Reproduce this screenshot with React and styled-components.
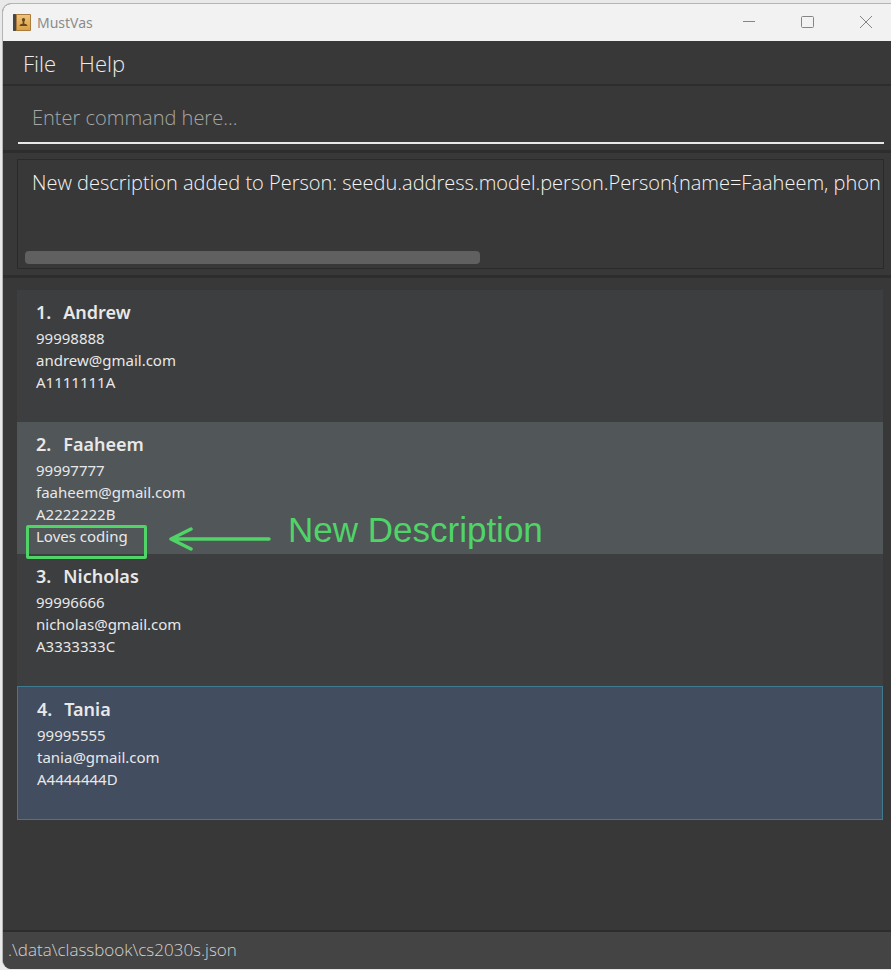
import React from "react";
import styled, { createGlobalStyle } from "styled-components";

const GlobalStyle = createGlobalStyle`
  *, *::before, *::after { box-sizing: border-box; }
  body {
    margin: 0;
    background: #e9e9e9;
    font-family: "Segoe UI", "Noto Sans", "Open Sans", sans-serif;
  }
`;

const lightFont = `"Segoe UI Light", "Open Sans", "Noto Sans", sans-serif`;

const Desktop = styled.div`
  min-height: 100vh;
  display: flex;
  padding: 3px 0 1px 2px;
  overflow: hidden;
`;

const Window = styled.div`
  flex: 1;
  min-width: 0;
  display: flex;
  flex-direction: column;
  background: #383838;
  border: solid #b4b6b6;
  border-width: 1px 0 0 1px;
  border-radius: 9px 0 0 9px;
  overflow: hidden;
`;

const TitleBar = styled.header`
  height: 37px;
  display: flex;
  align-items: center;
  gap: 6px;
  padding-left: 10px;
  background: #f2f2f2;
`;

const Title = styled.h1`
  flex: 1;
  margin: 0;
  font-size: 14px;
  line-height: 20px;
  font-weight: 400;
  color: #8b8b8b;
`;

const WindowButton = styled.button`
  width: 58px;
  height: 36px;
  display: grid;
  place-items: center;
  padding: 0;
  border: 0;
  background: transparent;
  color: #858585;
`;

const Controls = styled.div`
  display: flex;
  margin-right: -4px;
`;

const MenuBar = styled.nav`
  height: 45px;
  display: flex;
  align-items: center;
  gap: 23px;
  padding: 0 20px;
  border-bottom: 2px solid #2d2d2d;
`;

const MenuButton = styled.button`
  padding: 0;
  border: 0;
  background: transparent;
  color: #ececec;
  font-family: ${lightFont};
  font-size: 22px;
  line-height: 32px;
  font-weight: 300;
`;

const CommandPane = styled.form`
  padding: 7px 7px 6px 15px;
  border-bottom: 3px solid #2d2d2d;
`;

const CommandInput = styled.input`
  display: block;
  width: 100%;
  height: 51px;
  padding: 0 14px;
  border: 0;
  border-bottom: 2px solid #e8e8e8;
  border-radius: 0;
  outline: 0;
  background: transparent;
  color: #ffffff;
  font-family: ${lightFont};
  font-size: 20px;
  font-weight: 300;
  &::placeholder { color: #a6a6a6; opacity: 1; }
`;

const ResultPane = styled.section`
  padding: 6px 7px 6px 14px;
  border-bottom: 3px solid #2d2d2d;
`;

const ResultBox = styled.div`
  height: 110px;
  display: flex;
  flex-direction: column;
  justify-content: space-between;
  padding-bottom: 4px;
  border: 1px solid #2a2a2a;
`;

const ResultText = styled.textarea`
  display: block;
  width: 100%;
  height: 48px;
  padding: 7px 0 7px 14px;
  border: 0;
  outline: 0;
  resize: none;
  overflow: hidden;
  white-space: pre;
  background: transparent;
  color: #f4f4f4;
  font-family: ${lightFont};
  font-size: 20px;
  line-height: 32px;
  font-weight: 300;
`;

const ScrollTrack = styled.div`
  height: 13px;
  margin: 0 7px;
`;

const ScrollThumb = styled.div`
  width: 53.5%;
  height: 100%;
  border-radius: 4px;
  background: #606060;
`;

const ListPane = styled.main`
  flex: 1;
  padding: 12px 8px 24px 14px;
`;

const PersonList = styled.ol`
  margin: 0;
  padding: 0;
  list-style: none;
`;

const tones = {
  odd: "#3c3e3f",
  even: "#515658",
  selected: "#424d5f",
};

const PersonCard = styled.li`
  position: relative;
  min-height: ${(p) => (p.$tone === "selected" ? 134 : 132)}px;
  padding: 8px 19px 7px;
  border: ${(p) => (p.$tone === "selected" ? "1px solid #3e7b91" : "0")};
  background: ${(p) => tones[p.$tone]};
  color: #e8e8e8;
`;

const PersonName = styled.h2`
  display: flex;
  gap: 12px;
  margin: 0;
  font-size: 18px;
  line-height: 29px;
  font-weight: 600;
`;

const Detail = styled.p`
  margin: 0;
  font-size: 15px;
  line-height: 22px;
`;

const Annotation = styled.div`
  position: absolute;
  z-index: 1;
  left: 9px;
  top: 88px;
  display: flex;
  align-items: flex-start;
  color: #50d468;
`;

const Highlight = styled.div`
  width: 121px;
  height: 34px;
  margin: 15px 21px 0 0;
  border: 3px solid currentColor;
  border-radius: 2px;
`;

const Arrow = styled.svg`
  margin: 16px 16px 0 0;
`;

const Note = styled.span`
  font-family: "Liberation Sans", Arial, sans-serif;
  font-size: 35px;
  line-height: 40px;
  white-space: nowrap;
`;

const StatusBar = styled.footer`
  height: 39px;
  padding: 3px 5px;
  border-top: 2px solid #2d2d2d;
  background: #444444;
  color: #d2d2d2;
  font-family: ${lightFont};
  font-size: 17px;
  line-height: 30px;
  font-weight: 300;
`;

const people = [
  { name: "Andrew", phone: "99998888", email: "andrew@gmail.com", id: "A1111111A", tone: "odd" },
  { name: "Faaheem", phone: "99997777", email: "faaheem@gmail.com", id: "A2222222B", tone: "even", description: "Loves coding" },
  { name: "Nicholas", phone: "99996666", email: "nicholas@gmail.com", id: "A3333333C", tone: "odd" },
  { name: "Tania", phone: "99995555", email: "tania@gmail.com", id: "A4444444D", tone: "selected" },
];

function BookIcon() {
  return (
    <svg width="18" height="17" viewBox="0 0 18 17" aria-hidden="true">
      <defs>
        <linearGradient id="cover" x1="0" y1="0" x2="0" y2="1">
          <stop offset="0" stopColor="#efc379" />
          <stop offset="1" stopColor="#d9a145" />
        </linearGradient>
      </defs>
      <rect width="18" height="17" rx="1" fill="#a97b3c" />
      <rect width="3" height="17" rx="1" fill="#494745" />
      <rect x="4" y="1" width="13" height="15" fill="url(#cover)" />
      <path d="M10.500 4c1.100 0 1.700.8 1.600 1.900-.1.900-.5 1.400-.8 1.800v1.800c.6.700 3.200.6 3.200 2.500h-8c0-1.900 2.600-1.800 3.200-2.500V7.700c-.3-.4-.7-.9-.8-1.800C8.800 4.800 9.400 4 10.500 4z" fill="#67471f" />
    </svg>
  );
}

function ControlIcon({ d }) {
  return (
    <svg width="14" height="14" viewBox="0 0 14 14" fill="none" stroke="currentColor" aria-hidden="true">
      <path d={d} />
    </svg>
  );
}

function DescriptionAnnotation() {
  return (
    <Annotation>
      <Highlight />
      <Arrow width="104" height="26" viewBox="0 0 104 26" fill="none" stroke="currentColor" strokeWidth="3.500" strokeLinecap="round" strokeLinejoin="round" aria-hidden="true">
        <path d="M101 13H3M23 3 3 13l20 10" />
      </Arrow>
      <Note>New Description</Note>
    </Annotation>
  );
}

export default function App() {
  return (
    <Desktop>
      <GlobalStyle />
      <Window>
        <TitleBar>
          <BookIcon />
          <Title>MustVas</Title>
          <Controls>
            <WindowButton type="button" aria-label="Minimize"><ControlIcon d="M0 5.500h12" /></WindowButton>
            <WindowButton type="button" aria-label="Maximize"><ControlIcon d="M1.500.5h10a1 1 0 0 1 1 1v9a1 1 0 0 1-1 1h-10a1 1 0 0 1-1-1v-9a1 1 0 0 1 1-1z" /></WindowButton>
            <WindowButton type="button" aria-label="Close"><ControlIcon d="M1 0l12 12M13 0 1 12" /></WindowButton>
          </Controls>
        </TitleBar>
        <MenuBar>
          <MenuButton type="button">File</MenuButton>
          <MenuButton type="button">Help</MenuButton>
        </MenuBar>
        <CommandPane onSubmit={(e) => e.preventDefault()}>
          <CommandInput aria-label="Command" placeholder="Enter command here..." />
        </CommandPane>
        <ResultPane>
          <ResultBox>
            <ResultText
              readOnly
              wrap="off"
              aria-label="Result"
              value="New description added to Person: seedu.address.model.person.Person{name=Faaheem, phon"
            />
            <ScrollTrack><ScrollThumb /></ScrollTrack>
          </ResultBox>
        </ResultPane>
        <ListPane>
          <PersonList>
            {people.map((p, i) => (
              <PersonCard key={p.id} $tone={p.tone}>
                <PersonName><span>{i + 1}.</span><span>{p.name}</span></PersonName>
                <Detail>{p.phone}</Detail>
                <Detail>{p.email}</Detail>
                <Detail>{p.id}</Detail>
                {p.description && <Detail>{p.description}</Detail>}
                {p.description && <DescriptionAnnotation />}
              </PersonCard>
            ))}
          </PersonList>
        </ListPane>
        <StatusBar>.\data\classbook\cs2030s.json</StatusBar>
      </Window>
    </Desktop>
  );
}
